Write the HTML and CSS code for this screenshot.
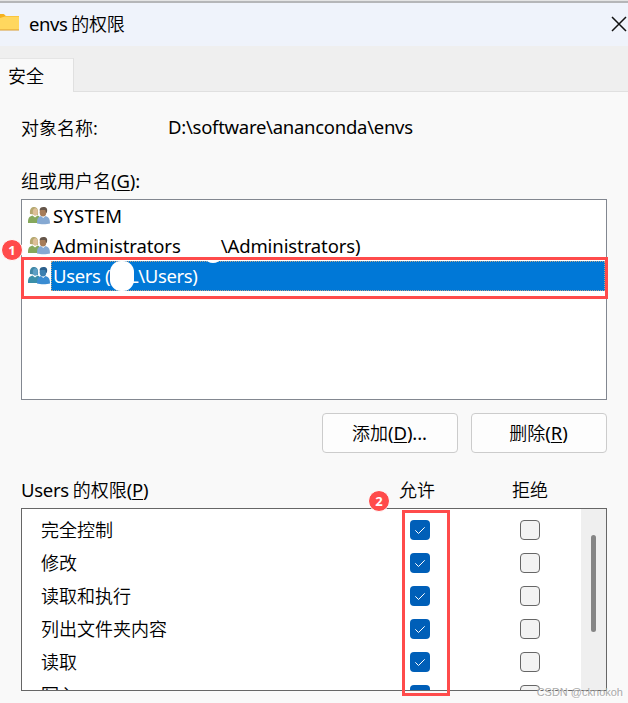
FILE: index.html
```html
<!DOCTYPE html>
<html lang="zh-CN">
<head>
    <meta charset="utf-8">
    <meta name="viewport" content="width=device-width, initial-scale=1.0">
    <title>envs 的权限</title>
    <link rel="stylesheet" href="styles.css">
</head>
<body>
    <svg class="defs" width="0" height="0">
        <symbol id="users" viewBox="0 0 22 20">
            <path class="skin-a" d="M2 8C1.500 2 4 .8 6.500 1 9.500 1.200 10.500 4 10 9z"/>
            <ellipse class="face-a" cx="7.300" cy="6" rx="2.500" ry="3.800"/>
            <path class="shirt-a" d="M0 17c0-5 1-6.500 4.500-7.500l2.500 2 2.500-2c2 .5 3 2 3 7.500z"/>
            <ellipse class="face-b" cx="15" cy="6.200" rx="3.300" ry="4.300"/>
            <path class="hair-b" d="M11.500 4.500C11.500 1.500 14 .6 16.500 1c2.700.6 3.200 2.700 2.300 6-1-.5-1.300-1.800-1.500-3-2 .2-4-.2-5.800.5z"/>
            <path class="shirt-b" d="M9 17.500c0-5 1-6.500 4-7.500l2.200 2 2.300-2c3.500 1 4.500 3 4.500 7.500-3 1-10 1-13 0z"/>
        </symbol>
        <symbol id="tick" viewBox="0 0 20 20">
            <path d="M5.300 10.300l3.200 3.200 6.200-6.200" fill="none" stroke="#fff" stroke-width="1"/>
        </symbol>
    </svg>

    <div class="window">
        <div class="top-edge"></div>

        <div class="titlebar">
            <svg class="folder" width="20" height="18" viewBox="0 0 20 18">
                <path d="M0 0h3.500c1 0 1.500 2 3 2H19v13H0z" fill="#f5b21f"/>
                <path d="M0 4l5-1.500h14v13.500H0z" fill="#ffd75e"/>
                <path d="M0 16h19" stroke="#dc9d31" stroke-width="1"/>
            </svg>
            <span class="window-title"><span class="latin">envs</span> 的权限</span>
            <svg class="close" width="16" height="16" viewBox="0 0 16 16">
                <path d="M1 1l14 14M15 1L1 15" stroke="#111" stroke-width="1.500"/>
            </svg>
        </div>

        <div class="tabs">
            <div class="tab">安全</div>
            <div class="tab-rest"></div>
        </div>

        <div class="page">
            <div class="object">
                <span class="object-label">对象名称:</span>
                <span class="latin path">D:\software\ananconda\envs</span>
            </div>

            <div class="label group-label">组或用户名<span class="latin">(<u>G</u>):</span></div>

            <div class="user-list">
                <div class="user">
                    <svg class="user-icon"><use href="#users"/></svg>
                    <span class="user-name latin system">SYSTEM</span>
                </div>
                <div class="user">
                    <svg class="user-icon"><use href="#users"/></svg>
                    <span class="user-name latin">Administrators<span class="gap"></span>\Administrators)</span>
                </div>
                <div class="user selected">
                    <svg class="user-icon"><use href="#users"/></svg>
                    <span class="user-name latin">Users (<span class="hidden-name">L</span>\Users)</span>
                    <i class="smudge"></i>
                    <i class="smudge small"></i>
                </div>
                <div class="mark mark-user"></div>
                <b class="step step1">1</b>
            </div>

            <div class="buttons">
                <button>添加<span class="latin">(<u>D</u>)...</span></button>
                <button>删除<span class="latin">(<u>R</u>)</span></button>
            </div>

            <div class="perm-header">
                <span class="perm-title"><span class="latin">Users</span> 的权限<span class="latin">(<u>P</u>)</span></span>
                <span class="col-allow">允许</span>
                <span class="col-deny">拒绝</span>
            </div>

            <div class="perm-box">
                <div class="perm-list">
                    <div class="perm"><span>完全控制</span><svg class="check on"><use href="#tick"/></svg><i class="check"></i></div>
                    <div class="perm"><span>修改</span><svg class="check on"><use href="#tick"/></svg><i class="check"></i></div>
                    <div class="perm"><span>读取和执行</span><svg class="check on"><use href="#tick"/></svg><i class="check"></i></div>
                    <div class="perm"><span>列出文件夹内容</span><svg class="check on"><use href="#tick"/></svg><i class="check"></i></div>
                    <div class="perm"><span>读取</span><svg class="check on"><use href="#tick"/></svg><i class="check"></i></div>
                    <div class="perm"><span>写入</span><svg class="check on"><use href="#tick"/></svg><i class="check"></i></div>
                </div>
                <div class="scrollbar"><div class="thumb"></div></div>
                <div class="mark mark-allow"></div>
                <b class="step step2">2</b>
            </div>
        </div>

        <div class="watermark">CSDN @cknokoh</div>
    </div>
</body>
</html>
```
FILE: styles.css
```css
/* ページ全体 */
* {
    box-sizing: border-box;
}

body {
    margin: 0;
    background-color: #f9f9f9;
    color: #000;
    font-family: "Noto Sans CJK SC", sans-serif;
    font-size: 18px;
    font-weight: 350;
    line-height: 30px;
}

.defs {
    position: absolute;
}

.latin {
    font-family: "Noto Sans", "Open Sans", sans-serif;
    font-size: 18.5px;
    font-weight: 400;
    letter-spacing: -0.1px;
}

.path {
    letter-spacing: -0.27px;
}

.system {
    letter-spacing: 0.2px;
}

u {
    text-decoration-thickness: 1px;
    text-underline-offset: 2px;
}

.window {
    position: relative;
    height: 703px;
    overflow: hidden;
}

.top-edge {
    height: 3px;
    background-color: #e4e4e4;
    border-bottom: 2px solid #b5b6b8;
}

/* 标题栏 */
.titlebar {
    display: flex;
    align-items: center;
    height: 43px;
    padding-right: 1px;
    background-color: #eff3fb;
}

.folder {
    margin-top: -3px;
}

.window-title {
    flex: 1;
    margin-left: 9px;
    margin-top: -3px;
    letter-spacing: -0.3px;
}

.window-title .latin {
    letter-spacing: -0.4px;
}

.close {
    margin-top: -2px;
}

/* 选项卡 */
.tabs {
    display: flex;
    height: 46px;
    background-color: #efefef;
}

.tab {
    width: 74px;
    height: 34px;
    margin-top: 12px;
    padding: 1px 0 0 8px;
    background-color: #f9f9f9;
    border-top: 1px solid #e5e5e5;
    border-right: 1px solid #e0e0e0;
}

.tab-rest {
    flex: 1;
    border-bottom: 1px solid #e0e0e0;
}

.page {
    padding: 20px 21px 0;
}

.object {
    display: flex;
    height: 30px;
}

.object-label {
    width: 147px;
}

.group-label {
    margin-top: 23px;
}

/* 用户列表 */
.user-list {
    position: relative;
    height: 201px;
    margin-top: 3px;
    padding: 1px;
    background-color: #fff;
    border: 1px solid #828790;
}

.user {
    position: relative;
    display: flex;
    height: 30px;
    padding-left: 5px;
}

.user-icon {
    width: 22px;
    height: 20px;
    margin: 5px 1px 0 0;
    --hair-a: #b5a870;
    --face-a: #ddbf98;
    --shirt-a: #86a85c;
    --hair-b: #66564a;
    --face-b: #a67c58;
    --shirt-b: #86a9d2;
}

.selected .user-icon {
    --hair-a: #3f86a5;
    --face-a: #5c9fc4;
    --shirt-a: #3a8fa8;
    --hair-b: #2c5f8c;
    --face-b: #3b7fb0;
    --shirt-b: #3a8cd2;
}

.skin-a { fill: var(--hair-a); }
.face-a { fill: var(--face-a); }
.shirt-a { fill: var(--shirt-a); }
.hair-b { fill: var(--hair-b); }
.face-b { fill: var(--face-b); }
.shirt-b { fill: var(--shirt-b); }

.user-name {
    flex: 1;
    padding-left: 2px;
    white-space: pre;
}

.gap {
    display: inline-block;
    width: 40px;
}

.selected .user-name {
    color: #fff;
    background-color: #0078d7;
    outline: 1px dotted #b5a48c;
    outline-offset: -1px;
    letter-spacing: -0.35px;
}

.hidden-name {
    display: inline-block;
    width: 28px;
    text-align: right;
}

/* 遮挡痕迹 */
.smudge {
    position: absolute;
    left: 87px;
    top: 0;
    width: 24px;
    height: 30px;
    border-radius: 11px;
    background-color: #fff;
}

.smudge.small {
    left: 183px;
    top: -6px;
    width: 14px;
    height: 8px;
    border-radius: 50%;
}

/* 标注 */
.mark {
    position: absolute;
    border: 3px solid #ff4b4b;
}

.mark-user {
    left: -1px;
    top: 57px;
    width: 587px;
    height: 42px;
}

.mark-allow {
    left: 380px;
    top: 1px;
    width: 48px;
    height: 186px;
}

.step {
    position: absolute;
    width: 22px;
    height: 22px;
    border: 1px solid #fff;
    border-radius: 50%;
    background-color: #ff4b4b;
    color: #fff;
    font: bold 13px/20px "Noto Sans", sans-serif;
    text-align: center;
}

.step1 {
    left: -21px;
    top: 39px;
}

.step2 {
    left: 346px;
    top: -19px;
}

/* 按钮 */
.buttons {
    display: flex;
    justify-content: flex-end;
    gap: 13px;
    margin-top: 13px;
}

button {
    width: 136px;
    height: 40px;
    padding: 0 1px 2px 0;
    background-color: #fdfdfd;
    border: 1px solid #ccc;
    border-radius: 4px;
    color: #000;
    font: inherit;
}

/* 权限 */
.perm-header {
    display: flex;
    height: 30px;
    margin-top: 21px;
}

.perm-title {
    width: 378px;
}

.perm-title .latin {
    letter-spacing: -0.3px;
}

.col-allow {
    width: 113px;
}

.perm-box {
    position: relative;
    display: flex;
    height: 183px;
    margin-top: 4px;
    background-color: #fff;
    border: 1px solid #666;
}

.perm-list {
    flex: 1;
    height: 181px;
    padding-top: 4px;
    overflow: hidden;
}

.perm {
    display: grid;
    grid-template-columns: 369px 110px 20px;
    align-items: center;
    height: 33px;
    padding-left: 19px;
}

.perm span {
    margin-top: -2px;
}

.check {
    width: 20px;
    height: 20px;
    border: 1px solid #666;
    border-radius: 4px;
    background-color: #f3f3f3;
}

.check.on {
    border: 0;
    background-color: #005fb8;
}

.scrollbar {
    width: 25px;
    padding: 26px 0 0 10px;
    background-color: #efefef;
}

.thumb {
    width: 5px;
    height: 97px;
    border-radius: 3px;
    background-color: #858585;
}

.watermark {
    position: absolute;
    right: 5px;
    bottom: 2px;
    color: #aaa;
    font: 11px/18px "Liberation Sans", sans-serif;
    text-shadow: 1px 1px 0 #fff;
}
```
